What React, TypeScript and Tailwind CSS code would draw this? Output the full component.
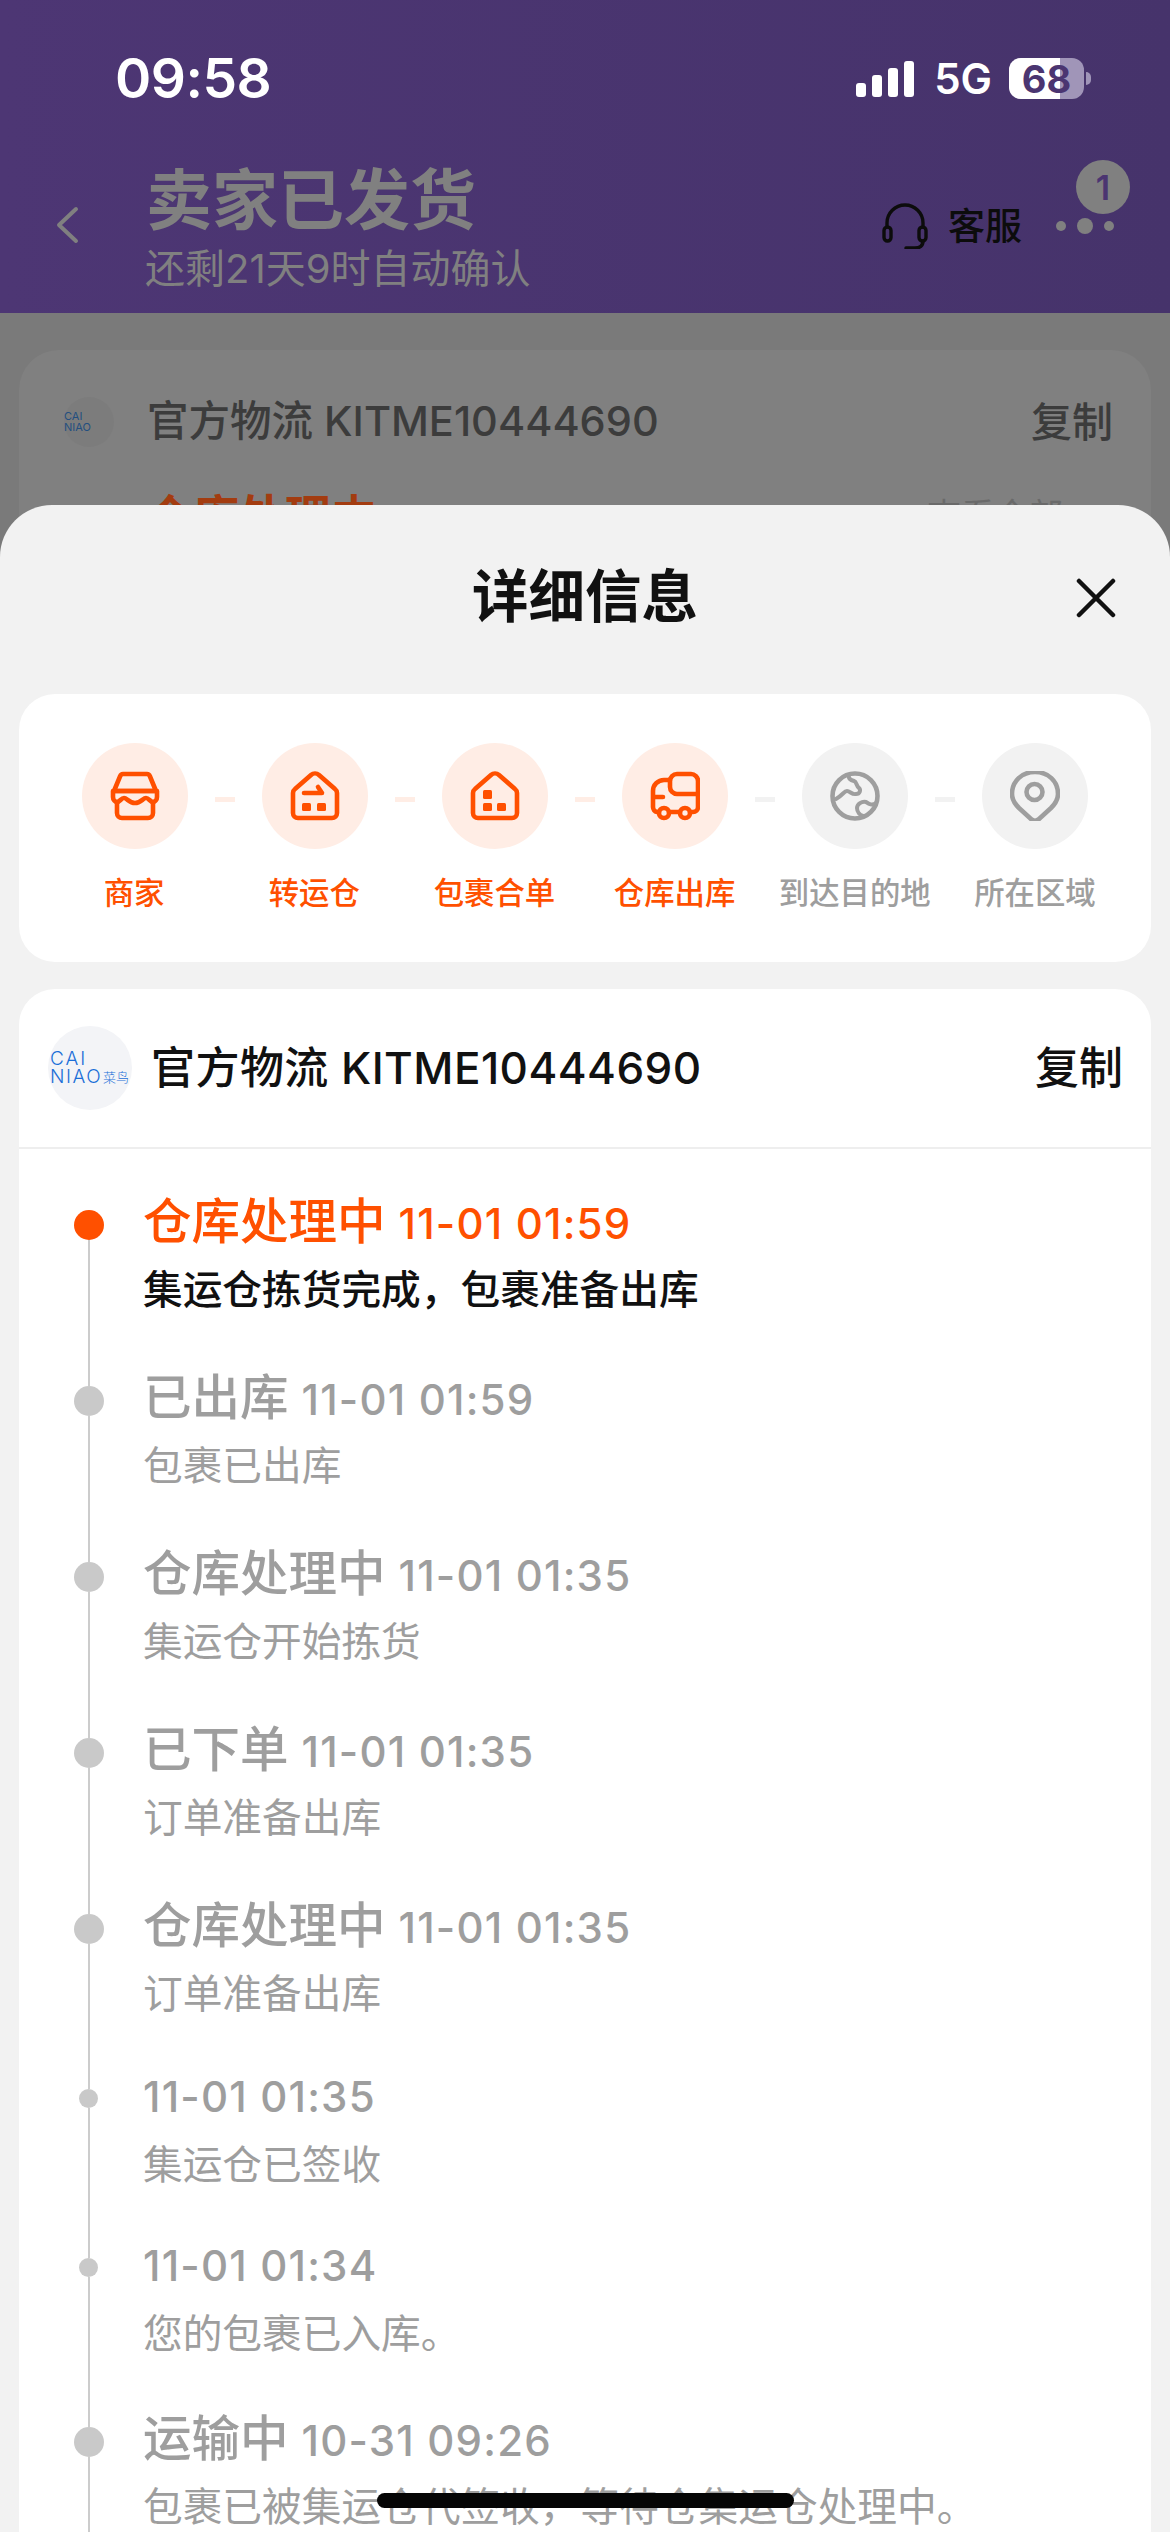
import { ReactNode } from 'react'

const ORANGE = '#ff5000'
const GRAY = '#9e9e9e'

function Svg({ color, children }: { color: string; children: ReactNode }) {
  return (
    <svg viewBox="0 0 50 50" className="w-[50px] h-[50px]" fill="none" stroke={color} strokeWidth="4.6" strokeLinecap="round" strokeLinejoin="round">
      {children}
    </svg>
  )
}

function StoreIcon() {
  return (
    <Svg color={ORANGE}>
      <path d="M13 3h24a3 3 0 0 1 2.8 2L46 20H4l6.2-15A3 3 0 0 1 13 3z" />
      <path d="M3 20h44v6c0 3-2 5-4 5-3 0-4-4-7-4s-5 5-11 5-8-5-11-5-4 4-7 4c-2 0-4-2-4-5z" />
      <path d="M7 31v11a5 5 0 0 0 5 5h26a5 5 0 0 0 5-5V31" />
    </Svg>
  )
}

const housePath = 'M21 4 5 18a5 5 0 0 0-2 4v20a5 5 0 0 0 5 5h34a5 5 0 0 0 5-5V22a5 5 0 0 0-2-4L29 4a6 6 0 0 0-8 0z'

function TransferIcon() {
  return (
    <Svg color={ORANGE}>
      <path d={housePath} />
      <path d="M14 22h18l-4-6" />
      <rect x="12" y="32" width="9" height="8" rx="1.5" fill={ORANGE} stroke="none" />
      <rect x="27" y="32" width="9" height="8" rx="1.5" fill={ORANGE} stroke="none" />
    </Svg>
  )
}

function ParcelIcon() {
  return (
    <Svg color={ORANGE}>
      <path d={housePath} />
      <rect x="13" y="19" width="9" height="9" rx="1.5" fill={ORANGE} stroke="none" />
      <rect x="13" y="32" width="9" height="8" rx="1.5" fill={ORANGE} stroke="none" />
      <rect x="27" y="32" width="9" height="8" rx="1.5" fill={ORANGE} stroke="none" />
    </Svg>
  )
}

function TruckIcon() {
  return (
    <Svg color={ORANGE}>
      <path d="M27 3h14a7 7 0 0 1 7 7v13H27a7 7 0 0 1-7-7v-6a7 7 0 0 1 7-7z" />
      <path d="M48 23v13a5 5 0 0 1-5 5h-3M30 41H19M9 41H7a5 5 0 0 1-4-5V20a11 11 0 0 1 11-11h6M3 26h10" />
      <circle cx="14" cy="42" r="5" />
      <circle cx="35" cy="42" r="5" />
    </Svg>
  )
}

function GlobeIcon() {
  return (
    <Svg color={GRAY}>
      <circle cx="25" cy="25" r="22.5" />
      <path d="M19 4c-1 4 2 5 5 6s2 5 5 7c2 2 1 6-3 6-4 1-6-3-9-3-3 0-4 4-11 8" strokeWidth="4" />
      <path d="M46 32c-4 3-7 1-10-1-4-1-9 2-9 6 0 4 3 7 6 8" strokeWidth="4" />
    </Svg>
  )
}

function PinIcon() {
  return (
    <Svg color={GRAY}>
      <path d="M25 1C12 1 2 10 2 23c0 6 3 10 7 14l12 11a6 6 0 0 0 8 0l12-11c4-4 7-8 7-14C48 10 38 1 25 1z" />
      <circle cx="24.5" cy="21" r="8" />
    </Svg>
  )
}

const steps = [
  { label: '商家', icon: <StoreIcon />, on: true },
  { label: '转运仓', icon: <TransferIcon />, on: true },
  { label: '包裹合单', icon: <ParcelIcon />, on: true },
  { label: '仓库出库', icon: <TruckIcon />, on: true },
  { label: '到达目的地', icon: <GlobeIcon />, on: false },
  { label: '所在区域', icon: <PinIcon />, on: false },
]

const events = [
  { title: '仓库处理中', time: '11-01 01:59', desc: '集运仓拣货完成，包裹准备出库', h: 'h-[176px]', active: true },
  { title: '已出库', time: '11-01 01:59', desc: '包裹已出库', h: 'h-[176px]' },
  { title: '仓库处理中', time: '11-01 01:35', desc: '集运仓开始拣货', h: 'h-[176px]' },
  { title: '已下单', time: '11-01 01:35', desc: '订单准备出库', h: 'h-[176px]' },
  { title: '仓库处理中', time: '11-01 01:35', desc: '订单准备出库', h: 'h-[171px]' },
  { title: '', time: '11-01 01:35', desc: '集运仓已签收', h: 'h-[169px]' },
  { title: '', time: '11-01 01:34', desc: '您的包裹已入库。', h: 'h-[173px]' },
  { title: '运输中', time: '10-31 09:26', desc: '包裹已被集运仓代签收，等待仓集运仓处理中。', h: 'h-[176px]' },
]

function StatusBar() {
  return (
    <div className="flex items-center h-[155px] pl-[115px] pr-[79px] pt-[2px] text-white">
      <span className="text-[55px] font-semibold leading-none tracking-[-0.5px]">09:58</span>
      <div className="ml-auto flex items-center">
        <div className="flex items-end gap-[6px] h-[36px]">
          <div className="w-[10px] h-[14px] rounded-[3px] bg-white" />
          <div className="w-[10px] h-[22px] rounded-[3px] bg-white" />
          <div className="w-[10px] h-[29px] rounded-[3px] bg-white" />
          <div className="w-[10px] h-[36px] rounded-[3px] bg-white" />
        </div>
        <span className="ml-[20px] text-[42px] font-semibold leading-none">5G</span>
        <div className="ml-[17px] relative w-[75px] h-[41px] rounded-[12px] bg-[#a095b8]">
          <div className="w-[51px] h-full rounded-l-[12px] bg-white" />
          <span className="absolute inset-0 flex items-center justify-center text-[38px] font-bold leading-none text-[#4b3571]">68</span>
        </div>
        <div className="ml-[2px] w-[5px] h-[13px] rounded-r-full bg-[#a095b8]" />
      </div>
    </div>
  )
}

function NavBar() {
  return (
    <div className="flex items-start h-[158px] pl-[55px] pr-[56px]">
      <svg viewBox="0 0 24 38" className="w-[24px] h-[38px] mt-[51px]" fill="none" stroke="#808080" strokeWidth="4" strokeLinecap="round" strokeLinejoin="round">
        <path d="M21 3 4 19l17 16" />
      </svg>
      <div className="ml-[67px] flex flex-col pt-[3px]">
        <span className="text-[66px] font-bold leading-[84px] text-[#808080]">卖家已发货</span>
        <span className="text-[40px] leading-[50px] mt-[2px] ml-[-1px] text-[#808080]">还剩21天9时自动确认</span>
      </div>
      <div className="ml-auto flex items-center mt-[48px]">
        <svg viewBox="0 0 46 46" className="w-[46px] h-[46px]" fill="none" stroke="#0c0c0c" strokeWidth="3.4" strokeLinecap="round">
          <path d="M5 24v-4a18 18 0 0 1 36 0v4" />
          <rect x="2" y="24" width="7" height="14" rx="3.5" />
          <rect x="37" y="24" width="7" height="14" rx="3.5" />
          <path d="M41 38c0 5-3 7-8 7h-9" />
        </svg>
        <span className="ml-[20px] text-[37px] leading-none font-medium text-[#0c0c0c]">客服</span>
        <div className="relative ml-[34px] flex items-center gap-[11px] w-[58px]">
          <div className="w-[10px] h-[10px] rounded-full bg-[#808080]" />
          <div className="w-[16px] h-[16px] rounded-full bg-[#808080]" />
          <div className="w-[10px] h-[10px] rounded-full bg-[#808080]" />
          <div className="absolute left-[20px] top-[-58px] w-[54px] h-[54px] rounded-full bg-[#808080] flex items-center justify-center text-[34px] font-semibold text-[#4b3571]">1</div>
        </div>
      </div>
    </div>
  )
}

function LogoMark({ size }: { size: 'sm' | 'lg' }) {
  if (size === 'sm') {
    return (
      <div className="w-[50px] h-[50px] rounded-full bg-[#7c7c7c] flex flex-col justify-center text-[#234f80] text-[11px] leading-[11px]">
        <span>CAI</span>
        <span className="whitespace-nowrap">NIAO</span>
      </div>
    )
  }
  return (
    <div className="w-[84px] h-[84px] rounded-full bg-[#f3f4f7] flex flex-col justify-center text-[#1b6fd8] font-light pl-[2px]">
      <span className="text-[19px] leading-[18px] tracking-[2px]">CAI</span>
      <span className="flex items-center whitespace-nowrap text-[19px] leading-[18px] tracking-[1.5px]">
        NIAO<span className="ml-[1px] text-[13px] tracking-normal">菜鸟</span>
      </span>
    </div>
  )
}

function Steps() {
  return (
    <div className="h-[268px] rounded-[36px] bg-white pt-[49px]">
      <div className="flex items-center pl-[63px]">
        {steps.map((s, i) => (
          <div key={s.label} className="flex items-center">
            <div className={`w-[106px] h-[106px] rounded-full flex items-center justify-center ${s.on ? 'bg-[#ffede5]' : 'bg-[#f2f2f2]'}`}>
              {s.icon}
            </div>
            {i < steps.length - 1 && (
              <div className={`mx-[27px] mt-[6px] w-[20px] h-[5px] ${i < 3 ? 'bg-[#ffede5]' : 'bg-[#f2f2f2]'}`} />
            )}
          </div>
        ))}
      </div>
      <div className="grid grid-cols-6 pl-[25px] pr-[26px] mt-[24px]">
        {steps.map((s) => (
          <span key={s.label} className={`text-center text-[30.4px] leading-[40px] font-medium whitespace-nowrap ${s.on ? 'text-[#ff5000]' : 'text-[#9e9e9e]'}`}>
            {s.label}
          </span>
        ))}
      </div>
    </div>
  )
}

function EventRow({ e, first }: { e: (typeof events)[number]; first: boolean }) {
  const color = e.active ? 'text-[#ff5000]' : 'text-[#9e9e9e]'
  return (
    <div className={`flex ${e.h}`}>
      <div className="w-[31px] ml-[54px] flex flex-col items-center">
        <div className={`w-[2px] ${e.title ? 'h-[26px]' : 'h-[30px]'} ${first ? 'bg-transparent' : 'bg-[#cccccc]'}`} />
        <div className={`rounded-full shrink-0 ${e.title ? 'w-[30px] h-[30px]' : 'w-[19px] h-[19px]'} ${e.active ? 'bg-[#ff5000]' : 'bg-[#c9c9c9]'}`} />
        <div className="w-[2px] flex-1 bg-[#cccccc]" />
      </div>
      <div className="ml-[39px] pt-[12px]">
        <div className={`flex items-baseline h-[52px] whitespace-nowrap ${color}`}>
          {e.title && <span className="text-[48.5px] font-medium leading-[52px] mr-[13px]">{e.title}</span>}
          <span className="text-[42px] font-medium leading-[52px] tracking-[1.2px]">{e.time}</span>
        </div>
        <p className={`mt-[18px] text-[39.7px] leading-[48px] whitespace-nowrap ${e.active ? 'text-[#111111] font-medium' : 'text-[#9e9e9e]'}`}>{e.desc}</p>
      </div>
    </div>
  )
}

function Sheet() {
  return (
    <div className="absolute inset-x-0 top-[505px] bottom-0 rounded-t-[52px] bg-[#f2f2f2] overflow-hidden px-[19px]">
      <div className="grid grid-cols-[1fr_auto_1fr] items-center h-[189px] pb-[4px]">
        <div />
        <span className="text-[56.5px] font-bold leading-none text-[#111111]">详细信息</span>
        <svg viewBox="0 0 40 40" className="w-[40px] h-[40px] justify-self-end mr-[35px]" fill="none" stroke="#111111" strokeWidth="4.5" strokeLinecap="round">
          <path d="M3 3l34 34M37 3 3 37" />
        </svg>
      </div>
      <Steps />
      <div className="mt-[27px] rounded-t-[36px] bg-white h-[1600px]">
        <div className="flex items-center h-[160px] pl-[29px] pr-[28px] border-b-2 border-[#eeeeee]">
          <LogoMark size="lg" />
          <span className="ml-[19px] text-[44px] font-medium leading-none tracking-[0.45px] text-[#111111]">官方物流 KITME10444690</span>
          <span className="ml-auto text-[44px] font-medium leading-none text-[#111111]">复制</span>
        </div>
        <div className="pt-[35px]">
          {events.map((e, i) => (
            <EventRow key={i} e={e} first={i === 0} />
          ))}
        </div>
      </div>
    </div>
  )
}

export default function App() {
  return (
    <div className="relative w-[1170px] h-[2532px] overflow-hidden bg-[#7a7a7a] font-['Inter','Noto_Sans_CJK_SC',sans-serif]">
      <div className="h-[313px] bg-linear-to-r from-[#4d3674] to-[#46336b]">
        <StatusBar />
        <NavBar />
      </div>
      <div className="mx-[19px] mt-[37px] rounded-[40px] bg-[#808080] h-[400px] pl-[45px] pr-[38px] pt-[37px]">
        <div className="flex items-center h-[70px]">
          <LogoMark size="sm" />
          <span className="ml-[33px] text-[41.5px] font-medium leading-none text-[#3c3c3c]">官方物流 KITME10444690</span>
          <span className="ml-auto text-[41px] font-medium leading-none text-[#3c3c3c]">复制</span>
        </div>
        <div className="flex items-center mt-[31px] text-[#a33c10]">
          <span className="ml-[83px] text-[46px] font-bold leading-[56px]">仓库处理中</span>
          <span className="ml-auto mr-[50px] text-[34px] leading-[56px] text-[#6a6a6a]">查看全部</span>
        </div>
      </div>
      <Sheet />
      <div className="absolute left-[377px] top-[2493px] w-[417px] h-[15px] rounded-full bg-[#050505]" />
    </div>
  )
}
